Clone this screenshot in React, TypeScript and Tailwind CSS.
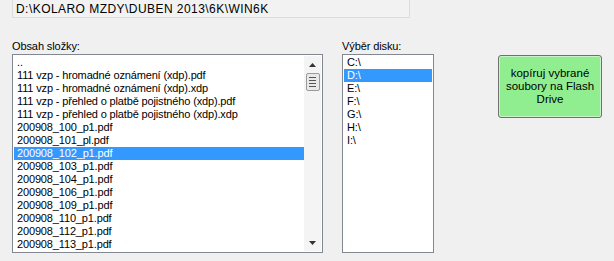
import React from "react";

const files = [
  "..",
  "111 vzp - hromadné oznámení (xdp).pdf",
  "111 vzp - hromadné oznámení (xdp).xdp",
  "111 vzp - přehled o platbě pojistného (xdp).pdf",
  "111 vzp - přehled o platbě pojistného (xdp).xdp",
  "200908_100_p1.pdf",
  "200908_101_pl.pdf",
  "200908_102_p1.pdf",
  "200908_103_p1.pdf",
  "200908_104_p1.pdf",
  "200908_106_p1.pdf",
  "200908_109_p1.pdf",
  "200908_110_p1.pdf",
  "200908_112_p1.pdf",
  "200908_113_p1.pdf",
];

const drives = ["C:\\", "D:\\", "E:\\", "F:\\", "G:\\", "H:\\", "I:\\"];

function Row({ text, selected }: { text: string; selected: boolean }) {
  return (
    <div
      className={
        "h-[13px] leading-[13px] pl-[3px] whitespace-nowrap tracking-[-0.15px] " +
        (selected ? "bg-[#3399ff] text-white" : "text-black")
      }
    >
      {text}
    </div>
  );
}

export default function App() {
  return (
    <div className="w-[614px] h-[261px] bg-[#f0f0f0] pl-3 font-['Liberation_Sans',Arial,sans-serif] text-[11px] text-black overflow-hidden">
      <div className="h-[19px] w-[398px] -mt-px border border-[#dcdcdc] bg-[#f2f2f2] flex items-center pl-[3px] leading-none text-[12px] tracking-[0.45px]">
        D:\KOLARO MZDY\DUBEN 2013\6K\WIN6K
      </div>
      <div className="flex mt-[20px]">
        <div className="flex flex-col">
          <div className="h-4 leading-4 tracking-[-0.1px]">Obsah složky:</div>
          <div className="w-[311px] h-[199px] border border-[#828790] bg-white flex p-px">
            <div className="flex-1 overflow-hidden">
              {files.map((f, i) => (
                <Row key={i} text={f} selected={i === 7} />
              ))}
            </div>
            <div className="w-[17px] h-full bg-[#f4f4f4] flex flex-col items-center justify-between pt-[7px] pb-[6px]">
              <div className="flex flex-col items-center gap-[6px]">
                <svg width="7" height="4" viewBox="0 0 7 4">
                  <path d="M3.5 0 L7 4 L0 4 Z" fill="#333" />
                </svg>
                <div className="w-[14px] h-[18px] border border-[#9a9a9a] rounded-[2px] bg-[#e8e8e8] flex flex-col items-center justify-center gap-[2px]">
                  <div className="w-[7px] h-px bg-[#555]" />
                  <div className="w-[7px] h-px bg-[#555]" />
                  <div className="w-[7px] h-px bg-[#555]" />
                  <div className="w-[7px] h-px bg-[#555]" />
                </div>
              </div>
              <svg width="7" height="4" viewBox="0 0 7 4">
                <path d="M0 0 L7 0 L3.5 4 Z" fill="#333" />
              </svg>
            </div>
          </div>
        </div>
        <div className="flex flex-col ml-[19px]">
          <div className="h-4 leading-4 tracking-[-0.1px]">Výběr disku:</div>
          <div className="w-[92px] h-[199px] border border-[#828790] bg-white p-px">
            {drives.map((d, i) => (
              <Row key={i} text={d} selected={i === 1} />
            ))}
          </div>
        </div>
        <div className="ml-[64px] mt-[17px]">
          <div className="w-[104px] h-[63px] border border-[#707070] rounded-[3px] bg-[#90ee90] flex items-center justify-center text-center leading-[13px] text-[11.5px] shadow-[inset_0_0_0_1px_#c8f5c8]">
            kopíruj vybrané
            <br />
            soubory na Flash
            <br />
            Drive
          </div>
        </div>
      </div>
    </div>
  );
}
